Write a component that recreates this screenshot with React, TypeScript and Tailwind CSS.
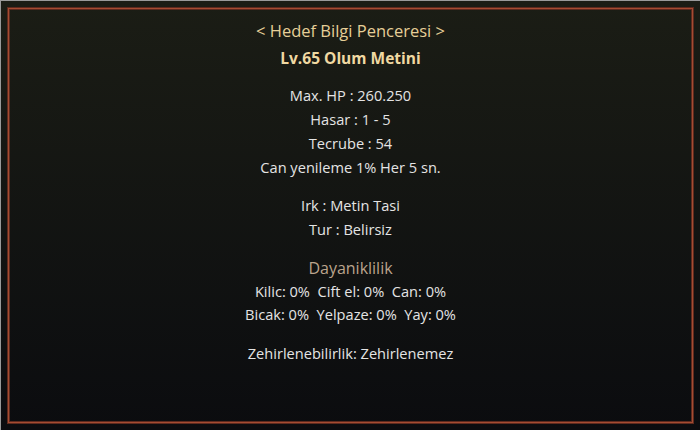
export default function App() {
  return (
    <div className="w-[700px] h-[430px] border-l border-t border-[#9a9a9a] bg-gradient-to-b from-[#1b1d15] to-[#0b0c0f] p-[6px] flex font-['Open_Sans',sans-serif]">
      <div className="flex-1 border border-[#5e2a1e]">
        <div className="h-full border border-[#a54c32]">
          <div className="h-full border border-[#5e2a1e] flex flex-col items-center text-[#e4e4e4] text-[14.6px] leading-[24px] pt-[9px]">
            <div className="text-[16.5px] text-[#e6cf98]">&lt; Hedef Bilgi Penceresi &gt;</div>
            <div className="text-[15.5px] font-bold text-[#f0d9a2] mt-[3px]">Lv.65 Olum Metini</div>
            <div className="mt-[13px] flex flex-col items-center">
              <div>Max. HP : 260.250</div>
              <div>Hasar : 1 - 5</div>
              <div>Tecrube : 54</div>
              <div>Can yenileme 1% Her 5 sn.</div>
            </div>
            <div className="mt-[14px] flex flex-col items-center">
              <div>Irk : Metin Tasi</div>
              <div>Tur : Belirsiz</div>
            </div>
            <div className="mt-[16px] text-[16px] leading-[23px] text-[#bba48c]">Dayaniklilik</div>
            <div className="leading-[23px]">Kilic: 0%&nbsp;&nbsp;Cift el: 0%&nbsp;&nbsp;Can: 0%</div>
            <div className="leading-[23px]">Bicak: 0%&nbsp;&nbsp;Yelpaze: 0%&nbsp;&nbsp;Yay: 0%</div>
            <div className="mt-[15px]">Zehirlenebilirlik: Zehirlenemez</div>
          </div>
        </div>
      </div>
    </div>
  )
}
